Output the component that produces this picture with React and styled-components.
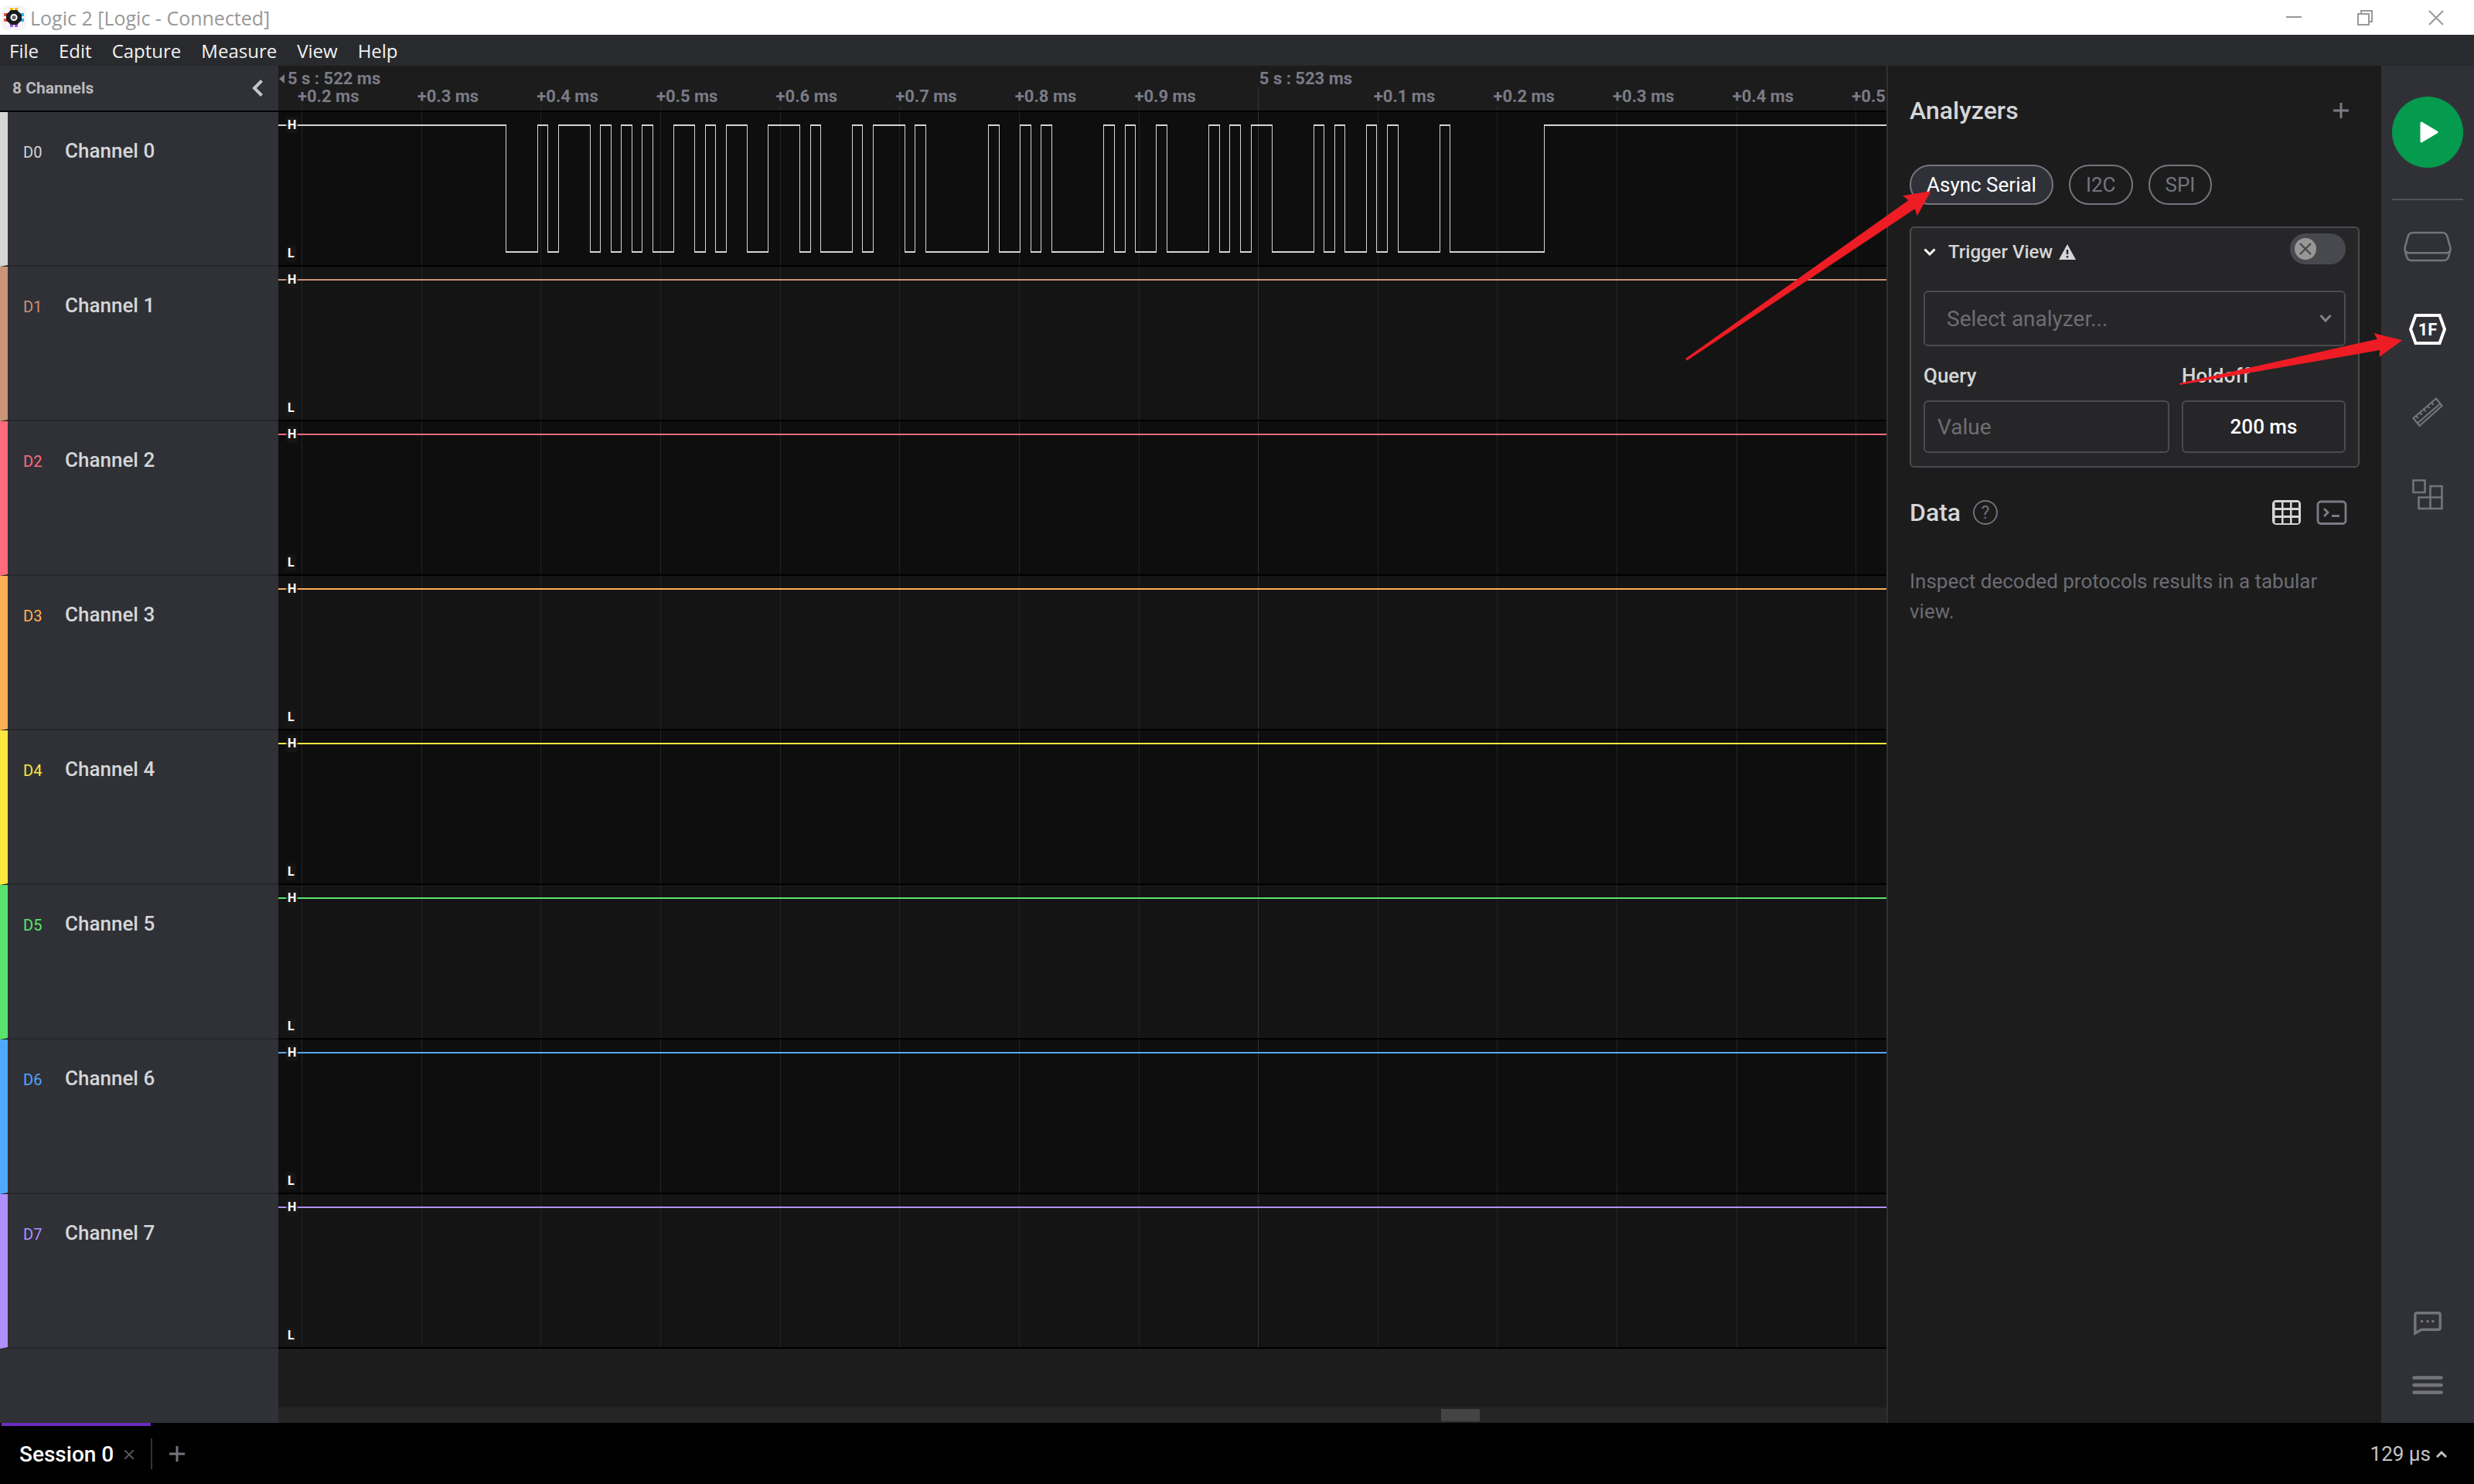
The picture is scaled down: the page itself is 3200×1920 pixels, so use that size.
import React from "react";
import styled, { createGlobalStyle } from "styled-components";

const c = {
  page: "#1c1c1c",
  side: "#303136",
  menu: "#292a2e",
  card: "#262628",
  line: "#4a4a51",
  text: "#d5d6d8",
  dim: "#6c6d74",
  axis: "#7a7b86",
};

const GlobalStyle = createGlobalStyle`
  * { box-sizing: border-box; }
  body { margin: 0; background: ${c.page}; }
  button, input, select { font: inherit; color: inherit; }
  svg { display: block; flex: none; }
`;

const Window = styled.div`
  position: relative;
  display: flex;
  flex-direction: column;
  min-height: 100vh;
  font-family: Roboto, "Liberation Sans", sans-serif;
  font-size: 26px;
  color: ${c.text};
  background: ${c.page};
  overflow: hidden;
`;

const PlainButton = styled.button`
  display: flex;
  align-items: center;
  padding: 0;
  border: 0;
  background: none;
  cursor: pointer;
`;

/* ---------- title bar and menu ---------- */

const TitleBar = styled.header`
  display: flex;
  align-items: center;
  gap: 5px;
  height: 45px;
  padding: 0 39px 0 2px;
  background: #fff;
  color: #999;
  font-family: "Open Sans", "Noto Sans", sans-serif;
  font-size: 25px;
`;

const WindowTitle = styled.span`
  flex: 1;
  line-height: 44px;
`;

const WindowButtons = styled.div`
  display: flex;
  gap: 72px;
`;

const MenuBar = styled.nav`
  display: flex;
  gap: 26px;
  height: 40px;
  padding: 1px 12px 0;
  background: ${c.menu};
  color: #f2f2f2;
`;

const MenuItem = styled(PlainButton)`
  font-family: "Open Sans", "Noto Sans", sans-serif;
  font-size: 24px;
  line-height: 38px;
`;

/* ---------- body ---------- */

const Body = styled.main`
  display: flex;
  flex: 1;
`;

const Sidebar = styled.aside`
  flex: 0 0 360px;
  background: ${c.side};
`;

const SidebarHeader = styled.div`
  display: flex;
  align-items: center;
  justify-content: space-between;
  height: 60px;
  padding: 0 20px 0 16px;
  border-bottom: 2px solid #000;
  font-size: 21px;
  font-weight: 700;
  color: #b8b9bc;
`;

const ChannelRow = styled.div`
  display: flex;
  align-items: baseline;
  height: 200px;
  padding: 34px 0 0 20px;
  border-left: 10px solid ${(p) => p.$color};
  border-bottom: 2px solid #262729;
`;

const ChannelId = styled.span`
  width: 54px;
  font-size: 20px;
  color: ${(p) => p.$color};
`;

const ChannelName = styled.span`
  font-weight: 500;
  line-height: 32px;
`;

const Waves = styled.section`
  display: flex;
  flex-direction: column;
  flex: 1;
  min-width: 0;
`;

const Ruler = styled.div`
  height: 60px;
  padding-top: 5px;
  border-bottom: 2px solid #000;
  overflow: hidden;
  color: ${c.axis};
  font-size: 22px;
  font-weight: 700;
  line-height: 23px;
  white-space: nowrap;
`;

const MajorLabels = styled.div`
  display: flex;
`;

const MajorLabel = styled.span`
  display: flex;
  align-items: center;
  flex: 0 0 61%;
  gap: 4px;
`;

const MinorLabels = styled.div`
  display: flex;
  padding-left: 25px;
`;

const MinorLabel = styled.span`
  flex: 0 0 calc(2080% / 2055 * 100 / 13.45);
`;

const TickMarks = styled.svg`
  width: 100%;
  height: 31px;
  margin-top: -23px;
`;

const Lane = styled.div`
  display: grid;
  height: 200px;
  border-bottom: 2px solid #000;
  background: ${(p) => (p.$odd ? "#141414" : "#0e0e0e")};
`;

const Trace = styled.svg`
  grid-area: 1 / 1;
  width: 100%;
  height: 198px;
`;

const Levels = styled.div`
  grid-area: 1 / 1;
  display: flex;
  flex-direction: column;
  align-items: flex-start;
  justify-content: space-between;
  padding: 6px 10px 4px;
`;

const Level = styled.span`
  padding: 0 2px;
  border-radius: 4px;
  background: rgba(24, 24, 24, 0.8);
  color: #fff;
  font-size: 16px;
  font-weight: 700;
  line-height: 22px;
`;

const Scrollbar = styled.div`
  height: 20px;
  margin-top: auto;
  padding: 2px 0 2px 1504px;
  background: #252525;
`;

const Thumb = styled.div`
  width: 50px;
  height: 16px;
  background: #444;
`;

/* ---------- analyzers ---------- */

const Panel = styled.section`
  flex: 0 0 640px;
  padding: 38px 28px 0;
  border-left: 2px solid ${c.side};
`;

const PanelHead = styled.div`
  display: flex;
  align-items: center;
  gap: ${(p) => p.$gap || 0}px;
  padding-right: ${(p) => p.$end}px;
`;

const PanelTitle = styled.h2`
  margin: 0;
  font-size: 32px;
  font-weight: 500;
  line-height: 40px;
`;

const Spacer = styled.span`
  flex: 1;
`;

const Pills = styled.div`
  display: flex;
  gap: 20px;
  margin-top: 50px;
`;

const Pill = styled.button`
  height: 52px;
  padding: 0 20px;
  border: 2px solid #74757f;
  border-radius: 26px;
  background: ${(p) => (p.$active ? "#303138" : "transparent")};
  color: ${(p) => (p.$active ? "#fff" : "#74757d")};
  line-height: 46px;
`;

const Card = styled.div`
  margin: 28px 0 38px;
  padding: 7px 16px 17px;
  border: 2px solid ${c.line};
  border-radius: 6px;
  background: ${c.card};
`;

const CardHead = styled.div`
  display: flex;
  align-items: flex-start;
  height: 48px;
  margin-bottom: 26px;
`;

const Disclosure = styled(PlainButton)`
  gap: 8px;
  font-size: 24px;
  font-weight: 500;
  line-height: 48px;
`;

const Switch = styled.label`
  display: grid;
  align-items: center;
  width: 72px;
  height: 40px;
  padding: 0 6px;
  border-radius: 20px;
  background: #48494f;
  & > * { grid-area: 1 / 1; }
`;

const HiddenCheck = styled.input`
  width: 60px;
  height: 28px;
  margin: 0;
  opacity: 0;
`;

const SelectBox = styled.div`
  display: grid;
  grid-template-columns: 1fr 34px;
  align-items: center;
  & > svg { grid-area: 1 / 2; pointer-events: none; }
`;

const Select = styled.select`
  grid-area: 1 / 1 / 2 / 3;
  height: 72px;
  padding: 0 28px;
  border: 2px solid ${c.line};
  border-radius: 6px;
  background: transparent;
  color: ${c.dim};
  font-size: 28px;
  appearance: none;
`;

const Fields = styled.div`
  display: grid;
  grid-template-columns: 3fr 2fr;
  gap: 16px;
  margin-top: 20px;
`;

const Field = styled.label`
  display: flex;
  flex-direction: column;
  gap: 14px;
  min-width: 0;
  font-weight: 500;
  line-height: 36px;
`;

const TextInput = styled.input`
  width: 100%;
  height: 68px;
  padding: 0 16px;
  border: 2px solid ${c.line};
  border-radius: 6px;
  background: transparent;
  color: #fff;
  font-size: ${(p) => (p.$centered ? 26 : 28)}px;
  font-weight: ${(p) => (p.$centered ? 500 : 400)};
  text-align: ${(p) => (p.$centered ? "center" : "left")};
  &::placeholder { color: #6e6e70; opacity: 1; }
`;

const Hint = styled.p`
  margin: 50px 0 0;
  color: ${c.dim};
  line-height: 39px;
`;

/* ---------- right rail ---------- */

const Rail = styled.nav`
  display: flex;
  flex-direction: column;
  align-items: center;
  flex: 0 0 120px;
  padding: 40px 0 37px;
  background: ${c.side};
`;

const Start = styled(PlainButton)`
  justify-content: center;
  width: 92px;
  height: 92px;
  border-radius: 50%;
  background: #059b4f;
`;

const RailDivider = styled.hr`
  width: 92px;
  height: 2px;
  margin: 40px 0;
  border: 0;
  background: #53545a;
`;

const RailGroup = styled.div`
  display: flex;
  flex-direction: column;
  align-items: center;
  gap: ${(p) => p.$gap}px;
`;

/* ---------- footer ---------- */

const Footer = styled.footer`
  display: flex;
  height: 79px;
  padding: 0 35px 0 2px;
  background: #000;
`;

const SessionTab = styled.div`
  display: flex;
  align-items: center;
  gap: 14px;
  padding: 0 22px 2px 23px;
  border-top: 4px solid #6a2cc0;
  color: #fff;
  font-size: 28px;
  font-weight: 500;
`;

const FooterRule = styled.span`
  width: 2px;
  height: 40px;
  margin: 20px 22px 0 0;
  background: #323338;
`;

const Duration = styled(PlainButton)`
  gap: 7px;
  margin-left: auto;
  color: #c4c5c9;
  font-size: 26px;
`;

const Annotations = styled.svg`
  position: absolute;
  top: 0;
  right: 0;
  pointer-events: none;
`;

/* ---------- data ---------- */

const CHANNELS = [
  "#d5d5d4", "#c99478", "#ff6b7c", "#ffb055",
  "#fae83f", "#59e56c", "#52a8ff", "#b090ff",
];

// Lane positions where the channel 0 signal changes level, starting high.
const EDGES = [
  294, 335, 348, 362, 403, 416, 430, 443, 457, 470, 484, 511, 538, 552, 565,
  579, 606, 633, 674, 688, 701, 742, 755, 769, 810, 823, 837, 918, 932, 959,
  973, 986, 1000, 1067, 1081, 1095, 1108, 1135, 1149, 1203, 1217, 1230, 1244,
  1258, 1285, 1339, 1352, 1366, 1379, 1407, 1420, 1434, 1448, 1502, 1515, 1637,
];

const TICKS = [
  "+0.2 ms", "+0.3 ms", "+0.4 ms", "+0.5 ms", "+0.6 ms", "+0.7 ms", "+0.8 ms",
  "+0.9 ms", "", "+0.1 ms", "+0.2 ms", "+0.3 ms", "+0.4 ms", "+0.5 ms",
];
const LANE_WIDTH = 2080;
const tickX = (i) => Math.round(30 + (i * LANE_WIDTH) / 13.45);

function tracePath(edges) {
  const hi = 16;
  const lo = 180;
  let d = "";
  let x = 0;
  let high = true;
  [...edges, LANE_WIDTH].forEach((e, i) => {
    d += `M${x} ${high ? hi : lo}H${e + (i < edges.length ? 1 : 0)}v2H${x}z`;
    if (i < edges.length) d += `M${e} ${hi}h1V${lo + 2}h-1z`;
    x = e;
    high = !high;
  });
  return d;
}

function ChannelLane({ color, index }) {
  return (
    <Lane $odd={index % 2 === 1}>
      <Trace viewBox="0 0 2080 198" preserveAspectRatio="none" shapeRendering="crispEdges">
        {TICKS.map((t, i) => (
          <rect key={i} x={tickX(i)} width="1" height="198" fill={t ? "#232323" : "#333"} />
        ))}
        <path fill={color} d={tracePath(index === 0 ? EDGES : [])} />
      </Trace>
      <Levels>
        <Level>H</Level>
        <Level>L</Level>
      </Levels>
    </Lane>
  );
}

/* ---------- icons ---------- */

const Logo = () => (
  <svg width="32" height="32" viewBox="0 0 32 32">
    <rect width="32" height="32" rx="7" fill="#f5f5fa" />
    <path d="M13 3v5M19 3v5" stroke="#fbb900" strokeWidth="4" />
    <path d="M13 23v5M19 23v5" stroke="#a45bea" strokeWidth="4" />
    <path d="M3 12h6M3 19h6" stroke="#f2503b" strokeWidth="4" />
    <path d="M23 12h6M23 19h6" stroke="#27b5ee" strokeWidth="4" />
    <path d="M12 6h8l6 6v7l-6 6h-8l-6-6v-7z" fill="#1b1c20" />
    <circle cx="16" cy="15.5" r="3.6" fill="#666" stroke="#fff" strokeWidth="2" />
  </svg>
);

const Plus = ({ color = c.axis }) => (
  <svg width="20" height="20" stroke={color} strokeWidth="3"><path d="M10 0v20M0 10h20" /></svg>
);

const DeviceIcon = () => (
  <svg width="62" height="40" fill="none" stroke="#74757a" strokeWidth="2.6">
    <path d="M12.5 2h37c4 0 6.500 2.500 7.200 6l3.600 13c.4 2 .2 3-.2 5l-1.800 6.500c-1 3.500-3 5.500-6.500 5.500H10.200c-3.500 0-5.500-2-6.500-5.500L1.900 26c-.4-2-.6-3-.2-5L5.300 8c.7-3.500 3.200-6 7.200-6z" />
    <path d="M2.500 26.500l3 1.700h51l3-1.700" />
  </svg>
);

const AnalyzerIcon = () => (
  <svg width="48" height="40">
    <path d="M8.500 2h31L46 20l-6.500 18h-31L2 20z" fill="none" stroke="#fff" strokeWidth="4" />
    <text x="24" y="28" textAnchor="middle" fontFamily="Roboto" fontSize="22" fontWeight="700" fill="#fff">1F</text>
  </svg>
);

const MeasureIcon = () => (
  <svg width="40" height="40" fill="none" stroke="#74757a" strokeWidth="2.2">
    <path d="M1.500 28L31 2.500 38.500 12 9.500 38z M7 34.500L36.500 9" />
    <path d="M5 25l2.600 3M10 20.700l2.600 3M15 16.400l2.600 3M20 12.100l2.600 3M25 7.800l2.600 3" />
  </svg>
);

const ExtensionsIcon = () => (
  <svg width="40" height="40" fill="none" stroke="#74757a" strokeWidth="2.6">
    <path d="M1.500 1.500h15v15.500h-15zM23.500 9h15v29h-15zM23.500 23.500h15M23.500 23.500H8.500V38h15" />
  </svg>
);

const ChatIcon = () => (
  <svg width="36" height="32" fill="none" stroke="#74757b" strokeWidth="3.400">
    <path d="M1.800 28V3.800c0-1.200.8-2 2-2h28.400c1.200 0 2 .8 2 2v17.400c0 1.200-.8 2-2 2H11.500c-1.600 0-2.600.3-4 1.400z" />
    <g fill="#74757b" stroke="none"><circle cx="10.500" cy="12.500" r="1.800" /><circle cx="18" cy="12.500" r="1.800" /><circle cx="25" cy="12.500" r="1.800" /></g>
  </svg>
);

const BurgerIcon = () => (
  <svg width="40" height="24" stroke="#74757b" strokeWidth="4.600" strokeLinecap="round">
    <path d="M2.500 2.500h35M2.500 12h35M2.500 21.500h35" />
  </svg>
);

export default function App() {
  return (
    <Window>
      <GlobalStyle />
      <TitleBar>
        <Logo />
        <WindowTitle>Logic 2 [Logic - Connected]</WindowTitle>
        <WindowButtons>
          <PlainButton aria-label="Minimize">
            <svg width="20" height="20" stroke="#999" strokeWidth="2"><path d="M0 9h20" /></svg>
          </PlainButton>
          <PlainButton aria-label="Restore">
            <svg width="20" height="20" fill="none" stroke="#999" strokeWidth="2"><path d="M1 5h14v14H1zM5 5V1h14v14h-4" /></svg>
          </PlainButton>
          <PlainButton aria-label="Close">
            <svg width="20" height="20" stroke="#999" strokeWidth="2"><path d="M1 1l18 18M19 1L1 19" /></svg>
          </PlainButton>
        </WindowButtons>
      </TitleBar>
      <MenuBar>
        {["File", "Edit", "Capture", "Measure", "View", "Help"].map((m) => (
          <MenuItem key={m}>{m}</MenuItem>
        ))}
      </MenuBar>

      <Body>
        <Sidebar>
          <SidebarHeader>
            8 Channels
            <PlainButton aria-label="Collapse">
              <svg width="14" height="22" fill="none" stroke="#c4c5c8" strokeWidth="4"><path d="M12.500 1.500L3 11l9.500 9.500" /></svg>
            </PlainButton>
          </SidebarHeader>
          {CHANNELS.map((color, i) => (
            <ChannelRow key={i} $color={color}>
              <ChannelId $color={color}>D{i}</ChannelId>
              <ChannelName>Channel {i}</ChannelName>
            </ChannelRow>
          ))}
        </Sidebar>

        <Waves>
          <Ruler>
            <MajorLabels>
              <MajorLabel>
                <svg width="8" height="12" fill={c.axis}><path d="M8 0v12L1 6z" /></svg>
                5 s : 522 ms
              </MajorLabel>
              <MajorLabel>5 s : 523 ms</MajorLabel>
            </MajorLabels>
            <MinorLabels>
              {TICKS.map((t, i) => (
                <MinorLabel key={i}>{t}</MinorLabel>
              ))}
            </MinorLabels>
            <TickMarks viewBox="0 0 2080 31" preserveAspectRatio="none" shapeRendering="crispEdges">
              {TICKS.map((t, i) => (
                <rect key={i} x={tickX(i)} y={t ? 24 : 0} width="1" height="31" fill={t ? "#2b2b2b" : "#383838"} />
              ))}
            </TickMarks>
          </Ruler>
          {CHANNELS.map((color, i) => (
            <ChannelLane key={i} color={color} index={i} />
          ))}
          <Scrollbar><Thumb /></Scrollbar>
        </Waves>

        <Panel>
          <PanelHead $end={14}>
            <PanelTitle>Analyzers</PanelTitle>
            <Spacer />
            <PlainButton aria-label="Add analyzer"><Plus /></PlainButton>
          </PanelHead>
          <Pills>
            <Pill $active>Async Serial</Pill>
            <Pill>I2C</Pill>
            <Pill>SPI</Pill>
          </Pills>
          <Card>
            <CardHead>
              <Disclosure>
                <svg width="24" height="12" fill="none" stroke="#fff" strokeWidth="3"><path d="M1.500 2.500L8 9l6.500-6.500" /></svg>
                Trigger View
                <svg width="22" height="20">
                  <path d="M11 0l11 20H0z" fill={c.text} />
                  <path d="M11 7v6M11 15v2.500" stroke={c.card} strokeWidth="2.400" />
                </svg>
              </Disclosure>
              <Spacer />
              <Switch>
                <HiddenCheck type="checkbox" aria-label="Enable trigger view" />
                <svg width="28" height="28">
                  <circle cx="14" cy="14" r="14" fill="#979796" />
                  <path d="M7 7l14 14M21 7L7 21" stroke="#48494f" strokeWidth="2.400" />
                </svg>
              </Switch>
            </CardHead>
            <SelectBox>
              <Select aria-label="Analyzer">
                <option>Select analyzer...</option>
              </Select>
              <svg width="16" height="12" fill="none" stroke="#7f808a" strokeWidth="3"><path d="M1.500 2L8 9l6.500-7" /></svg>
            </SelectBox>
            <Fields>
              <Field>
                Query
                <TextInput placeholder="Value" />
              </Field>
              <Field>
                Holdoff
                <TextInput $centered defaultValue="200 ms" />
              </Field>
            </Fields>
          </Card>
          <PanelHead $end={16} $gap={16}>
            <PanelTitle>Data</PanelTitle>
            <PlainButton aria-label="Help">
              <svg width="32" height="32">
                <circle cx="16" cy="16" r="15" fill="none" stroke="#6f7078" strokeWidth="2" />
                <text x="16" y="24" textAnchor="middle" fontFamily="Roboto" fontSize="23" fill="#6f7078">?</text>
              </svg>
            </PlainButton>
            <Spacer />
            <PlainButton aria-label="Table view">
              <svg width="42" height="32">
                <rect x="1" width="37" height="32" rx="5" fill={c.text} />
                {[4, 15, 26].map((x) => [3, 13, 23].map((y) => (
                  <rect key={`${x}-${y}`} x={x + 0.5} y={y} width="8.500" height="7" fill={c.page} />
                )))}
              </svg>
            </PlainButton>
            <PlainButton aria-label="Terminal view">
              <svg width="40" height="32" fill="none" stroke="#7a7b86" strokeWidth="2.800">
                <rect x="2" y="2" width="36" height="28.500" rx="4" />
                <path d="M10 11l5 5-5 5M20 20.500h10" />
              </svg>
            </PlainButton>
          </PanelHead>
          <Hint>Inspect decoded protocols results in a tabular view.</Hint>
        </Panel>

        <Rail>
          <Start aria-label="Start capture">
            <svg width="30" height="28"><path d="M7 2l20 12L7 26z" fill="#fff" stroke="#fff" strokeWidth="3" strokeLinejoin="round" /></svg>
          </Start>
          <RailDivider />
          <RailGroup $gap={67}>
            <PlainButton aria-label="Device"><DeviceIcon /></PlainButton>
            <PlainButton aria-label="Analyzers"><AnalyzerIcon /></PlainButton>
            <PlainButton aria-label="Measurements"><MeasureIcon /></PlainButton>
            <PlainButton aria-label="Extensions"><ExtensionsIcon /></PlainButton>
          </RailGroup>
          <Spacer />
          <RailGroup $gap={51}>
            <PlainButton aria-label="Feedback"><ChatIcon /></PlainButton>
            <PlainButton aria-label="Menu"><BurgerIcon /></PlainButton>
          </RailGroup>
        </Rail>
      </Body>

      <Footer>
        <SessionTab>
          Session 0
          <PlainButton aria-label="Close session">
            <svg width="12" height="12" stroke="#55565c" strokeWidth="2"><path d="M0 0l12 12M12 0L0 12" /></svg>
          </PlainButton>
        </SessionTab>
        <FooterRule />
        <PlainButton aria-label="New session"><Plus color="#74757f" /></PlainButton>
        <Duration>
          129 µs
          <svg width="14" height="10" fill="none" stroke="#c4c5c9" strokeWidth="3"><path d="M1 9l6-6 6 6" /></svg>
        </Duration>
      </Footer>

      <Annotations width="1040" height="520" viewBox="2160 0 1040 520" fill="#ee1c24">
        <path d="M2180 464L2468.700 259L2461 253.300L2497.500 247.300L2479.800 279.300L2476.800 270.300L2182 466.500z" />
        <path d="M2819 496L3075 438.700L3070.500 431L3107.300 440.300L3077.300 462L3078.300 453L2819.500 498z" />
      </Annotations>
    </Window>
  );
}
